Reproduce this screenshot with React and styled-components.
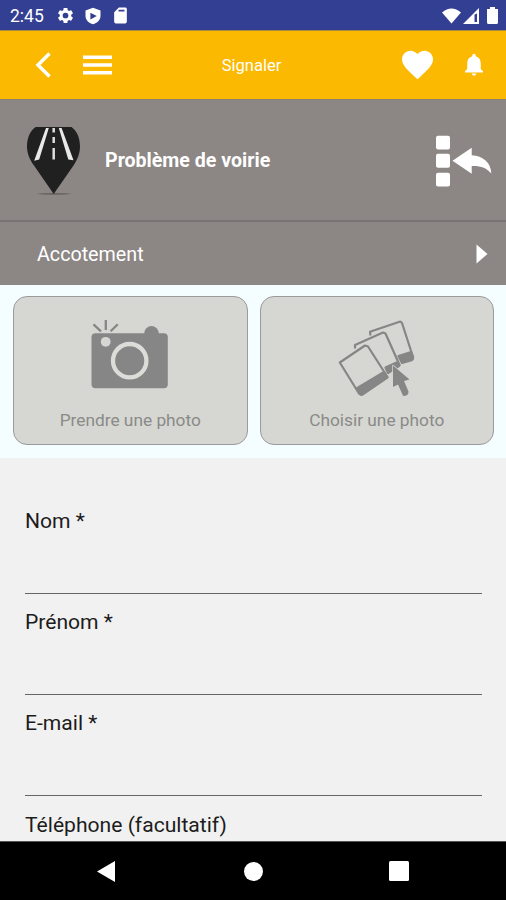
import React from "react";
import styled, {createGlobalStyle} from "styled-components";

const GlobalStyle = createGlobalStyle`
  * {
    box-sizing: border-box;
  }

  body {
    margin: 0;
    background: #f1f1f1;
    font-family: Roboto, "Liberation Sans", sans-serif;
  }

  svg {
    display: block;
    flex: none;
  }
`;

const Screen = styled.div`
  width: 506px;
  height: 900px;
  display: flex;
  flex-direction: column;
  overflow: hidden;
`;

const StatusBar = styled.div`
  height: 30px;
  flex: none;
  display: flex;
  align-items: center;
  padding: 1px 8px 0 10px;
  background: #323f92;
  color: #fff;
`;

const Clock = styled.span`
  width: 46px;
  padding-top: 1px;
  font-size: 17.5px;
  line-height: 28px;
`;

const StatusIcons = styled.div`
  display: flex;
  align-items: center;
  gap: ${({$gap}) => $gap}px;
  margin-left: ${({$end}) => ($end ? "auto" : 0)};
`;

const Header = styled.header`
  height: 69px;
  flex: none;
  display: grid;
  grid-template-columns: 1fr auto 1fr;
  align-items: center;
  padding: 0 23px 0 35px;
  background: #fbb901;
  border-top: 1px solid #a98a3c;

  h1 {
    margin: 1px 0 0;
    padding-right: 15px;
    color: #fff;
    font-size: 16.5px;
    font-weight: 400;
  }
`;

const HeaderGroup = styled.div`
  display: flex;
  align-items: center;
  justify-content: ${({$end}) => ($end ? "flex-end" : "flex-start")};
  gap: 32px;
  padding-bottom: 1px;
`;

const Category = styled.section`
  height: 121px;
  flex: none;
  display: flex;
  align-items: center;
  padding: 1px 14px 0 26px;
  background: #8c8785;
  border-top: 1px solid #8a806c;

  h2 {
    flex: 1;
    margin: 0 0 0 24px;
    color: #fff;
    font-size: 19.6px;
    font-weight: 700;
  }
`;

const SubCategory = styled.section`
  height: 65px;
  flex: none;
  display: flex;
  align-items: center;
  justify-content: space-between;
  padding: 0 18px 0 37px;
  background: #8c8785;
  border-top: 2px solid #797473;
  color: #fff;
  font-size: 19.7px;

  span {
    padding-top: 2px;
  }
`;

const Photos = styled.div`
  height: 173px;
  flex: none;
  display: grid;
  grid-template-columns: 1fr 1fr;
  gap: 12px;
  padding: 11px 12px 13px 13px;
  background: #f4fdff;
`;

const PhotoButton = styled.button`
  display: flex;
  flex-direction: column;
  align-items: center;
  padding: 19px 0 0;
  border: 1px solid #9a9c9b;
  border-radius: 14px;
  background: #d6d7d2;
  color: #8a8a88;
  font-family: inherit;
  font-size: 17.3px;
  line-height: 24px;

  svg {
    margin-bottom: 12px;
  }
`;

const Form = styled.form`
  flex: 1;
  min-height: 0;
  overflow: hidden;
  padding: 50px 24px 0 25px;
  background: #f1f1f1;
`;

const Field = styled.label`
  display: flex;
  flex-direction: column;
  height: 101.2px;
  color: #1c1c1c;
  font-size: 21.1px;
  line-height: 26px;
`;

const Input = styled.input`
  height: 60px;
  padding: 0;
  border: 0;
  border-bottom: 1.5px solid #666;
  background: transparent;
  outline: none;
`;

const NavBar = styled.nav`
  height: 59px;
  flex: none;
  display: flex;
  justify-content: space-between;
  align-items: center;
  padding: 0 97px;
  border-top: 1px solid #555;
  background: #000;
`;

const Glyph = ({w = 19, h = w, box = "0 0 24 24", d}) => (
    <svg width={w} height={h} viewBox={box} fill="#fff">
        <path fillRule="evenodd" d={d}/>
    </svg>
);

const GEAR = "M19.14 12.94c.04-.3.06-.61.06-.94 0-.32-.02-.64-.07-.94l2.03-1.58c.18-.14.23-.41.12-.61l-1.92-3.32c-.12-.22-.37-.29-.59-.22l-2.39.96c-.5-.38-1.03-.7-1.62-.94l-.36-2.54c-.04-.24-.24-.41-.48-.41h-3.84c-.24 0-.43.17-.47.41l-.36 2.54c-.59.24-1.13.57-1.62.94l-2.39-.96c-.22-.08-.47 0-.59.22L2.74 8.87c-.12.21-.08.47.12.61l2.03 1.58c-.05.3-.09.63-.09.94s.02.64.07.94l-2.03 1.58c-.18.14-.23.41-.12.61l1.92 3.32c.12.22.37.29.59.22l2.39-.96c.5.38 1.03.7 1.62.94l.36 2.54c.05.24.24.41.48.41h3.84c.24 0 .44-.17.47-.41l.36-2.54c.59-.24 1.13-.56 1.62-.94l2.39.96c.22.08.47 0 .59-.22l1.92-3.32c.12-.22.07-.47-.12-.61l-2.01-1.58zM12 15.6a3.6 3.6 0 1 1 0-7.2 3.6 3.6 0 0 1 0 7.2z";
const SHIELD = "M12 1 2 4.600V12c0 5.100 4.300 9.600 10 11 5.700-1.400 10-5.900 10-11V4.600zM8.500 7.500l8.500 4.500-8.500 4.500z";
const SD_CARD = "M18 2h-8L4 8v12c0 1.100.9 2 2 2h12c1.100 0 2-.9 2-2V4c0-1.100-.9-2-2-2zM9.500 4.800h7.500v2h-7.500z";
const HEART = "M12 21.350 10.550 20.030C5.400 15.360 2 12.280 2 8.500 2 5.420 4.420 3 7.500 3c1.740 0 3.410.810 4.500 2.090C13.090 3.810 14.760 3 16.500 3 19.580 3 22 5.420 22 8.500c0 3.780-3.400 6.860-8.550 11.540z";
const BELL = "M12 22c1.100 0 2-.9 2-2h-4c0 1.100.890 2 2 2zm6-6v-5c0-3.070-1.640-5.640-4.500-6.320V4c0-.830-.670-1.500-1.500-1.500s-1.500.670-1.500 1.500v.680C7.630 5.360 6 7.920 6 11v5l-2 2v1h16v-1z";

const RoadPin = () => (
    <svg width="55" height="72" viewBox="26 124 55 72">
        <ellipse cx="54" cy="192.800" rx="17" ry="0.900" fill="#686462"/>
        <path
            d="M35.500 126H71.500C77 130 80 137 80 145.500C80 153 77 159 73.500 164.500L53.700 193L34 164.500C30 159 27 153 27 145.500C27 137 30 130 35.500 126Z"
            fill="#202020"
        />
        <path d="M46 127h2.800L39.200 158.500l-5 1.200zM58.800 127h2.800l11.900 32.300-5.200-.8z" fill="#e8e8e8"/>
        <path d="M53.700 127v4.500M53.700 136v6M53.700 147v11.500" stroke="#ddd" strokeWidth="2.500"/>
    </svg>
);

const BackToList = () => (
    <svg width="56" height="54" viewBox="436 133.500 56 54" fill="#fff">
        <rect x="436" y="135.200" width="14" height="13.800" rx="2"/>
        <rect x="436" y="153.300" width="14" height="14" rx="2"/>
        <rect x="436" y="172.200" width="14" height="13.800" rx="2"/>
        <path d="M452.500 160.300L471.700 147.300V154.800C483 155.500 491 162 491.300 173C486.500 167.500 481 165.200 471.700 165.500V173.300Z"/>
    </svg>
);

const Camera = () => (
    <svg width="78" height="80" viewBox="91.500 316 78 80">
        <g fill="#868686">
            <rect x="92" y="333.300" width="76.300" height="55" rx="4"/>
            <circle cx="152" cy="333.300" r="7.200"/>
        </g>
        <path d="M94 324.300l7.500 7M106.300 320v10M118.300 324.300l-7.200 7" stroke="#868686" strokeWidth="2.300"/>
        <circle cx="106.200" cy="341.800" r="4.900" fill="#d6d7d2"/>
        <circle cx="130.200" cy="360.700" r="16.700" fill="none" stroke="#dcddd9" strokeWidth="4.300"/>
    </svg>
);

const Gallery = () => (
    <svg width="78" height="80" viewBox="338 316 78 80" fill="none" stroke="#868686" strokeWidth="2.200" strokeLinejoin="round">
        <path d="M370.500 335.500L370 331.800L400.300 321.500L402 323L413 357"/>
        <path d="M398.500 356L411 352L413 357Q413.500 359.500 411 360.500L402 363Z" fill="#868686"/>
        <path d="M355 348.500L355 345L383 332.500L385.500 333.500L400 366"/>
        <path d="M385.500 367.500L396.500 362.500L399 366L388 373Z" fill="#868686"/>
        <path d="M339.800 362.500L365 345.500L368 346.500L387.500 377L361 394.500L359 393.500Z" fill="#d6d7d2"/>
        <path d="M356.500 388.500L384 372L387.300 377.500L362.500 394.500Q360.500 395.500 359 393Z" fill="#868686"/>
        <path
            d="M393 365.500L409.500 379.500L404 381L408.500 391.500Q408.500 396.500 403 395.800L398 384.500L393 387Z"
            fill="#868686"
            stroke="#d6d7d2"
            strokeWidth="1.500"
            paintOrder="stroke"
        />
    </svg>
);

const fields = ["Nom *", "Prénom *", "E-mail *", "Téléphone (facultatif)"];

const App = () => {
    return (
        <Screen>
            <GlobalStyle/>

            <StatusBar>
                <Clock>2:45</Clock>
                <StatusIcons $gap={9}>
                    <Glyph w={19} d={GEAR}/>
                    <Glyph w={18} d={SHIELD}/>
                    <Glyph w={19} d={SD_CARD}/>
                </StatusIcons>
                <StatusIcons $end $gap={2}>
                    <Glyph w={19} h={16} box="0 0 19 16" d="M0 4.500Q9.500-3.500 19 4.500L9.500 15.500z"/>
                    <Glyph w={16} h={16} box="0 0 16 16" d="M16 0v16H0zM11.500 6.500V14h2.500V5.500z"/>
                    <Glyph w={17} h={17} box="-6 0 17 17" d="M3 0h5v2h3v13.500q0 1.500-1.500 1.500h-8Q0 17 0 15.500V2h3z"/>
                </StatusIcons>
            </StatusBar>

            <Header>
                <HeaderGroup>
                    <svg width="16" height="26" viewBox="0 0 16 26" fill="none" stroke="#fff" strokeWidth="3.500">
                        <path d="M14.500 1.500L3 13l11.500 11.500"/>
                    </svg>
                    <svg width="29" height="20" viewBox="0 0 29 20" stroke="#fff" strokeWidth="3.500">
                        <path d="M0 2.200h29M0 10h29M0 17.800h29"/>
                    </svg>
                </HeaderGroup>
                <h1>Signaler</h1>
                <HeaderGroup $end>
                    <Glyph w={31} h={30} box="2 2.500 20 19.350" d={HEART}/>
                    <Glyph w={18} h={23} box="4 2 16 20" d={BELL}/>
                </HeaderGroup>
            </Header>

            <Category>
                <RoadPin/>
                <h2>Problème de voirie</h2>
                <BackToList/>
            </Category>

            <SubCategory>
                <span>Accotement</span>
                <Glyph w={12} h={20} box="0 0 12 20" d="M0.500 0.500L11.500 10L0.500 19.500z"/>
            </SubCategory>

            <Photos>
                <PhotoButton>
                    <Camera/>
                    Prendre une photo
                </PhotoButton>
                <PhotoButton>
                    <Gallery/>
                    Choisir une photo
                </PhotoButton>
            </Photos>

            <Form>
                {fields.map((label) => (
                    <Field key={label}>
                        {label}
                        <Input/>
                    </Field>
                ))}
            </Form>

            <NavBar>
                <Glyph w={18} h={21} box="0 0 18 21" d="M0 10.500L18 0v21z"/>
                <Glyph w={22} h={19} box="-3 0 22 19" d="M9.500 0a9.500 9.500 0 1 1 0 19a9.500 9.500 0 0 1 0-19z"/>
                <Glyph w={20} box="0 0 20 20" d="M1.500 0h17Q20 0 20 1.500v17q0 1.500-1.500 1.500h-17Q0 20 0 18.500v-17Q0 0 1.500 0z"/>
            </NavBar>
        </Screen>
    );
};

export default App;
